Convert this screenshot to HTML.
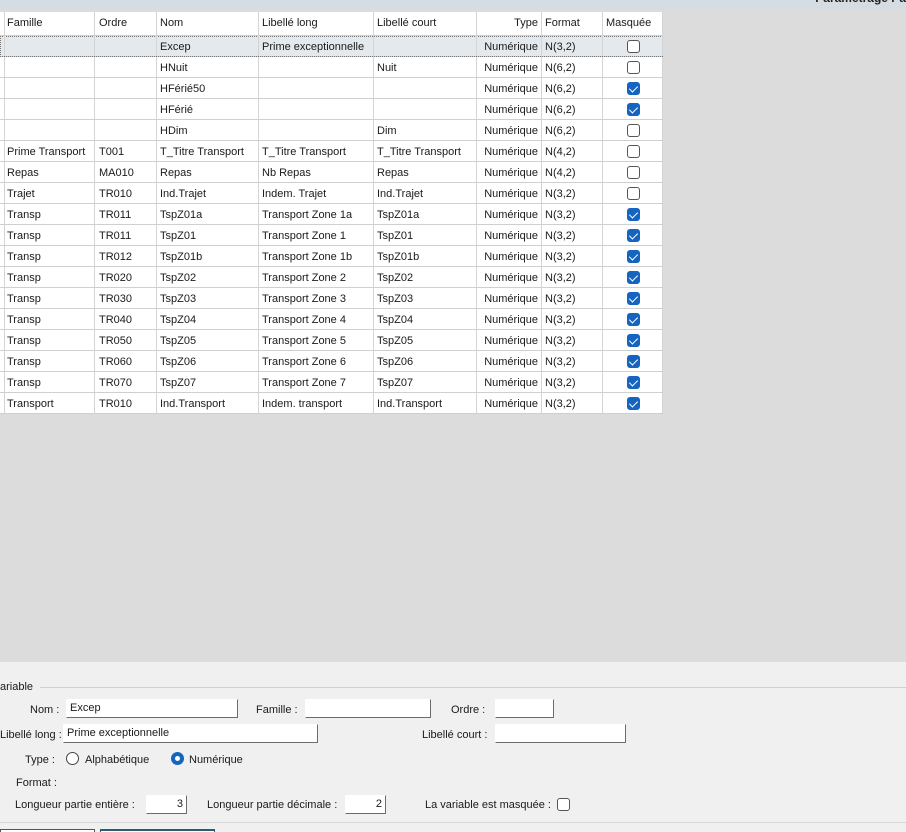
<!DOCTYPE html>
<html><head><meta charset="utf-8"><style>
*{margin:0;padding:0;box-sizing:border-box}
html,body{width:906px;height:832px;overflow:hidden}
body{background:#dcdcdc;font-family:"Liberation Sans",sans-serif;font-size:11px;color:#1a1a1a;position:relative}
.top{position:absolute;left:0;top:0;width:906px;height:10px;background:#d5dde3;overflow:hidden}
.title{position:absolute;right:0;top:-9px;font-weight:bold;font-size:12px;color:#222}
.grid{position:absolute;left:0;top:12px;width:663px;background:#fff}
.row{position:relative;height:21px;border-bottom:1px solid #cfcfcf}
.hdr{height:24px;background:#fff;border-bottom:1px solid #cfcfcf}
.c{position:absolute;top:0;height:100%;line-height:22px;padding-left:4px;border-right:1px solid #d4d4d4;white-space:nowrap;overflow:hidden}
.hdr .c{line-height:22px}
.sel{background:#e4e9ed;outline:1px dotted #777;outline-offset:-1px}
.r{text-align:right;padding-right:3px}
.cb{position:absolute;left:25px;top:4px;width:13px;height:13px;border:1px solid #555;border-radius:3px;background:#fff}
.cb.on{background:#1565c0;border-color:#1565c0}
.cb.on:after{content:"";position:absolute;left:3px;top:1px;width:4px;height:7px;border:solid #fff;border-width:0 1.5px 1.5px 0;transform:rotate(45deg)}
.panel{position:absolute;left:0;top:662px;width:906px;height:170px;background:#f0f0f0;overflow:hidden}
.lbl{position:absolute;font-size:11px}
.in{position:absolute;height:19px;background:#fff;border:1px solid #fff;border-bottom:1px solid #6b6b6b;border-right:1px solid #6b6b6b;padding:2px 3px;font-size:11px}
</style></head><body>
<div class="top"><div class="title">Paramétrage Pa</div></div>
<div class="grid">
<div class="row hdr">
<div class="c" style="left:0;width:4px"></div>
<div class="c" style="left:3px;width:92px">Famille</div>
<div class="c" style="left:95px;width:62px">Ordre</div>
<div class="c" style="left:156px;width:103px">Nom</div>
<div class="c" style="left:258px;width:116px">Libellé long</div>
<div class="c" style="left:373px;width:104px">Libellé court</div>
<div class="c r" style="left:476px;width:66px">Type</div>
<div class="c" style="left:541px;width:62px">Format</div>
<div class="c" style="left:602px;width:61px">Masquée</div>
</div>
<div id="rows"></div>
</div>
<script>
var d=[["","","Excep","Prime exceptionnelle","","N(3,2)",0],["","","HNuit","","Nuit","N(6,2)",0],["","","HFérié50","","","N(6,2)",1],["","","HFérié","","","N(6,2)",1],["","","HDim","","Dim","N(6,2)",0],["Prime Transport","T001","T_Titre Transport","T_Titre Transport","T_Titre Transport","N(4,2)",0],["Repas","MA010","Repas","Nb Repas","Repas","N(4,2)",0],["Trajet","TR010","Ind.Trajet","Indem. Trajet","Ind.Trajet","N(3,2)",0],["Transp","TR011","TspZ01a","Transport Zone 1a","TspZ01a","N(3,2)",1],["Transp","TR011","TspZ01","Transport Zone 1","TspZ01","N(3,2)",1],["Transp","TR012","TspZ01b","Transport Zone 1b","TspZ01b","N(3,2)",1],["Transp","TR020","TspZ02","Transport Zone 2","TspZ02","N(3,2)",1],["Transp","TR030","TspZ03","Transport Zone 3","TspZ03","N(3,2)",1],["Transp","TR040","TspZ04","Transport Zone 4","TspZ04","N(3,2)",1],["Transp","TR050","TspZ05","Transport Zone 5","TspZ05","N(3,2)",1],["Transp","TR060","TspZ06","Transport Zone 6","TspZ06","N(3,2)",1],["Transp","TR070","TspZ07","Transport Zone 7","TspZ07","N(3,2)",1],["Transport","TR010","Ind.Transport","Indem. transport","Ind.Transport","N(3,2)",1]];
var h="";d.forEach(function(r,i){h+='<div class="row'+(i==0?' sel':'')+'"><div class="c" style="left:0;width:4px"></div><div class="c" style="left:3px;width:92px">'+r[0]+'</div><div class="c" style="left:95px;width:62px">'+r[1]+'</div><div class="c" style="left:156px;width:103px">'+r[2]+'</div><div class="c" style="left:258px;width:116px">'+r[3]+'</div><div class="c" style="left:373px;width:104px">'+r[4]+'</div><div class="c r" style="left:476px;width:66px">Numérique</div><div class="c" style="left:541px;width:62px">'+r[5]+'</div><div class="c" style="left:602px;width:61px"><div class="cb'+(r[6]?' on':'')+'"></div></div></div>'});document.getElementById("rows").innerHTML=h;
</script>
<div class="panel">
<div style="position:absolute;left:40px;right:0;top:25px;border-top:1px solid #d0d0d0"></div>
<div class="lbl" style="left:0;top:19px">ariable</div>
<div class="lbl" style="left:30px;top:42px">Nom :</div>
<div class="in" style="left:66px;top:37px;width:172px">Excep</div>
<div class="lbl" style="left:256px;top:42px">Famille :</div>
<div class="in" style="left:305px;top:37px;width:126px"></div>
<div class="lbl" style="left:451px;top:42px">Ordre :</div>
<div class="in" style="left:495px;top:37px;width:59px"></div>
<div class="lbl" style="left:0;top:67px">Libellé long :</div>
<div class="in" style="left:63px;top:62px;width:255px">Prime exceptionnelle</div>
<div class="lbl" style="left:422px;top:67px">Libellé court :</div>
<div class="in" style="left:495px;top:62px;width:131px"></div>
<div class="lbl" style="left:25px;top:92px">Type :</div>
<div style="position:absolute;left:66px;top:90px;width:13px;height:13px;border:1px solid #444;border-radius:50%;background:#fff"></div>
<div class="lbl" style="left:85px;top:92px">Alphabétique</div>
<div style="position:absolute;left:171px;top:90px;width:13px;height:13px;border-radius:50%;background:#1565c0"><div style="position:absolute;left:4px;top:4px;width:5px;height:5px;border-radius:50%;background:#fff"></div></div>
<div class="lbl" style="left:189px;top:92px">Numérique</div>
<div class="lbl" style="left:16px;top:115px">Format :</div>
<div class="lbl" style="left:15px;top:137px">Longueur partie entière :</div>
<div class="in" style="left:146px;top:133px;width:41px;text-align:right">3</div>
<div class="lbl" style="left:207px;top:137px">Longueur partie décimale :</div>
<div class="in" style="left:345px;top:133px;width:41px;text-align:right">2</div>
<div class="lbl" style="left:425px;top:137px">La variable est masquée :</div>
<div style="position:absolute;left:557px;top:136px;width:13px;height:13px;border:1px solid #555;border-radius:3px;background:#fff"></div>
<div style="position:absolute;left:0;right:0;top:160px;border-top:1px solid #d8d8d8"></div>
<div style="position:absolute;left:0;top:167px;width:95px;height:3px;border:1px solid #555;border-bottom:0;background:#fdfdfd"></div>
<div style="position:absolute;left:100px;top:167px;width:115px;height:3px;border-top:2px solid #2b5d72;border-left:1px solid #2b5d72;border-right:1px solid #2b5d72;background:#fff"></div>
</div>
</body></html>
